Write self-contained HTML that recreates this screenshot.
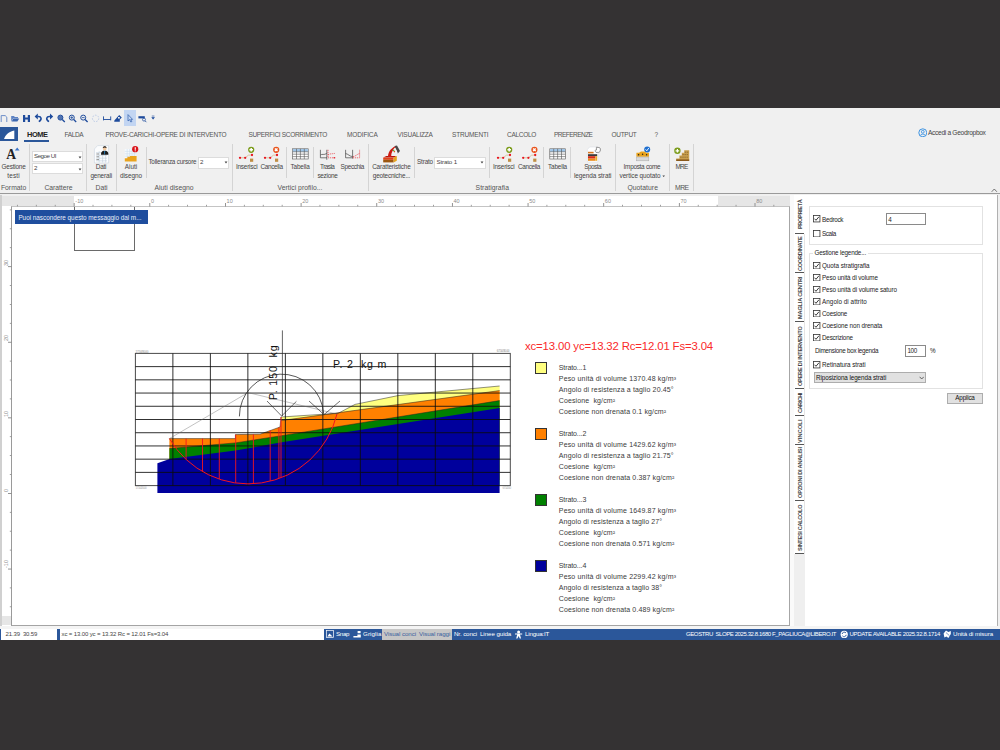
<!DOCTYPE html><html><head><meta charset="utf-8"><title>GeoStru Slope</title><style>
html,body{margin:0;padding:0}body{width:1000px;height:750px;position:relative;overflow:hidden;background:#343233;font-family:"Liberation Sans", sans-serif;}
div,svg,span{position:absolute}span{white-space:pre;line-height:1;}
</style></head><body>
<div style="left:0px;top:108.4px;width:1000px;height:531.8px;background:#f0f0f0;"></div>
<div style="left:124px;top:110px;width:12px;height:16px;background:#c2d5f2;"></div>
<div style="left:0px;top:127.4px;width:17.6px;height:14px;background:#2b579a;"></div>
<svg style="left:0px;top:127px" width="18" height="15" viewBox="0 0 18 15"><path d="M4 12 L14.3 12 L14.3 3.4 C9 4.4 5.4 7.6 4 12Z" fill="#fff"/></svg>
<div style="left:24.4px;top:140.3px;width:24.6px;height:1.5px;background:#2b579a;"></div>
<svg style="left:917.5px;top:127.5px" width="9.6" height="9.6" viewBox="0 0 9.6 9.6"><circle cx="4.8" cy="4.8" r="4" fill="none" stroke="#2d8ae0" stroke-width="0.9"/><circle cx="4.8" cy="3.8" r="1.4" fill="none" stroke="#2d8ae0" stroke-width="0.8"/><path d="M2.2 7.6 C2.6 5.6 7 5.6 7.4 7.6" fill="none" stroke="#2d8ae0" stroke-width="0.8"/></svg>
<svg style="left:990.5px;top:187.5px" width="7" height="5" viewBox="0 0 7 5"><path d="M0.7 3.8 L3.3 1 L5.9 3.8" fill="none" stroke="#555" stroke-width="0.8"/></svg>
<div style="left:0px;top:192.6px;width:1000px;height:0.8px;background:#fff;"></div>
<div style="left:0px;top:193.3px;width:1000px;height:1.2px;background:#9a9a9a;"></div>
<div style="left:28.9px;top:144px;width:1px;height:46.5px;background:#d4d4d4;"></div>
<div style="left:85.9px;top:144px;width:1px;height:46.5px;background:#d4d4d4;"></div>
<div style="left:115.5px;top:144px;width:1px;height:46.5px;background:#d4d4d4;"></div>
<div style="left:231.5px;top:144px;width:1px;height:46.5px;background:#d4d4d4;"></div>
<div style="left:367.5px;top:144px;width:1px;height:46.5px;background:#d4d4d4;"></div>
<div style="left:615.1px;top:144px;width:1px;height:46.5px;background:#d4d4d4;"></div>
<div style="left:668.9px;top:144px;width:1px;height:46.5px;background:#d4d4d4;"></div>
<div style="left:693.1px;top:144px;width:1px;height:46.5px;background:#d4d4d4;"></div>
<div style="left:145.5px;top:147px;width:1px;height:31px;background:#d4d4d4;"></div>
<div style="left:286.1px;top:147px;width:1px;height:31px;background:#d4d4d4;"></div>
<div style="left:312.9px;top:147px;width:1px;height:31px;background:#d4d4d4;"></div>
<div style="left:413.9px;top:147px;width:1px;height:31px;background:#d4d4d4;"></div>
<div style="left:488.9px;top:147px;width:1px;height:31px;background:#d4d4d4;"></div>
<div style="left:543.1px;top:147px;width:1px;height:31px;background:#d4d4d4;"></div>
<div style="left:570.1px;top:147px;width:1px;height:31px;background:#d4d4d4;"></div>
<div style="left:32px;top:151px;width:51px;height:11.2px;background:#fff;border:1px solid #dcdcdc;box-sizing:border-box;"></div>
<div style="left:32px;top:163px;width:51px;height:11.2px;background:#fff;border:1px solid #dcdcdc;box-sizing:border-box;"></div>
<svg style="left:77.5px;top:155.6px" width="4" height="3" viewBox="0 0 4 3"><path d="M0.6 0.6 L3.4 0.6 L2 2.4Z" fill="#444"/></svg>
<svg style="left:77.5px;top:167.6px" width="4" height="3" viewBox="0 0 4 3"><path d="M0.6 0.6 L3.4 0.6 L2 2.4Z" fill="#444"/></svg>
<div style="left:198px;top:156.6px;width:31px;height:12px;background:#fff;border:1px solid #dcdcdc;box-sizing:border-box;"></div>
<svg style="left:223.5px;top:161.2px" width="4" height="3" viewBox="0 0 4 3"><path d="M0.6 0.6 L3.4 0.6 L2 2.4Z" fill="#444"/></svg>
<div style="left:434.4px;top:156.6px;width:52px;height:12px;background:#fff;border:1px solid #dcdcdc;box-sizing:border-box;"></div>
<svg style="left:480.4px;top:161.2px" width="4" height="3" viewBox="0 0 4 3"><path d="M0.6 0.6 L3.4 0.6 L2 2.4Z" fill="#444"/></svg>
<svg style="left:662.3px;top:174.8px" width="3.4" height="2.6" viewBox="0 0 3.4 2.6"><path d="M0.4 0.5 L3 0.5 L1.7 2.1Z" fill="#444"/></svg>
<div style="left:2px;top:196.4px;width:788px;height:10.6px;background:#fff;"></div>
<div style="left:2px;top:196.4px;width:71.5px;height:10px;background:#e6e6e6;"></div>
<div style="left:718px;top:196.4px;width:72px;height:10px;background:#e6e6e6;"></div>
<div style="left:0px;top:195px;width:2px;height:431px;background:#d0d0d0;"></div>
<div style="left:2px;top:207px;width:9.5px;height:418.5px;background:#fff;"></div>
<div style="left:2px;top:615.6px;width:9px;height:9px;background:#e6e6e6;"></div>
<div style="left:11.4px;top:206.4px;width:778.8px;height:419.8px;background:#fff;border:1px solid #c4c4c4;box-sizing:border-box;border-left-color:#9a9a9a;border-bottom-color:#a4a4a4;border-right-color:#a6a6a6;"></div>
<svg style="left:0px;top:196.4px" width="792" height="11" viewBox="0 0 792 11"><rect x="16.96" y="8.8" width="0.8" height="1.6" fill="#888"/><rect x="35.87" y="8.8" width="0.8" height="1.6" fill="#888"/><rect x="54.79" y="8.8" width="0.8" height="1.6" fill="#888"/><rect x="73.70" y="7" width="0.9" height="3.6" fill="#888"/><rect x="92.61" y="8.8" width="0.8" height="1.6" fill="#888"/><rect x="111.52" y="8.8" width="0.8" height="1.6" fill="#888"/><rect x="130.44" y="8.8" width="0.8" height="1.6" fill="#888"/><rect x="149.35" y="7" width="0.9" height="3.6" fill="#888"/><rect x="168.26" y="8.8" width="0.8" height="1.6" fill="#888"/><rect x="187.17" y="8.8" width="0.8" height="1.6" fill="#888"/><rect x="206.09" y="8.8" width="0.8" height="1.6" fill="#888"/><rect x="225.00" y="7" width="0.9" height="3.6" fill="#888"/><rect x="243.91" y="8.8" width="0.8" height="1.6" fill="#888"/><rect x="262.83" y="8.8" width="0.8" height="1.6" fill="#888"/><rect x="281.74" y="8.8" width="0.8" height="1.6" fill="#888"/><rect x="300.65" y="7" width="0.9" height="3.6" fill="#888"/><rect x="319.56" y="8.8" width="0.8" height="1.6" fill="#888"/><rect x="338.48" y="8.8" width="0.8" height="1.6" fill="#888"/><rect x="357.39" y="8.8" width="0.8" height="1.6" fill="#888"/><rect x="376.30" y="7" width="0.9" height="3.6" fill="#888"/><rect x="395.21" y="8.8" width="0.8" height="1.6" fill="#888"/><rect x="414.13" y="8.8" width="0.8" height="1.6" fill="#888"/><rect x="433.04" y="8.8" width="0.8" height="1.6" fill="#888"/><rect x="451.95" y="7" width="0.9" height="3.6" fill="#888"/><rect x="470.86" y="8.8" width="0.8" height="1.6" fill="#888"/><rect x="489.78" y="8.8" width="0.8" height="1.6" fill="#888"/><rect x="508.69" y="8.8" width="0.8" height="1.6" fill="#888"/><rect x="527.60" y="7" width="0.9" height="3.6" fill="#888"/><rect x="546.51" y="8.8" width="0.8" height="1.6" fill="#888"/><rect x="565.43" y="8.8" width="0.8" height="1.6" fill="#888"/><rect x="584.34" y="8.8" width="0.8" height="1.6" fill="#888"/><rect x="603.25" y="7" width="0.9" height="3.6" fill="#888"/><rect x="622.16" y="8.8" width="0.8" height="1.6" fill="#888"/><rect x="641.08" y="8.8" width="0.8" height="1.6" fill="#888"/><rect x="659.99" y="8.8" width="0.8" height="1.6" fill="#888"/><rect x="678.90" y="7" width="0.9" height="3.6" fill="#888"/><rect x="697.81" y="8.8" width="0.8" height="1.6" fill="#888"/><rect x="716.73" y="8.8" width="0.8" height="1.6" fill="#888"/><rect x="735.64" y="8.8" width="0.8" height="1.6" fill="#888"/><rect x="754.55" y="7" width="0.9" height="3.6" fill="#888"/><rect x="773.46" y="8.8" width="0.8" height="1.6" fill="#888"/></svg>
<svg style="left:0.8px;top:0px" width="11" height="640" viewBox="0 0 11 640"><rect x="8.8" y="606.40" width="1.6" height="0.8" fill="#888"/><rect x="8.8" y="587.50" width="1.6" height="0.8" fill="#888"/><rect x="7" y="568.60" width="3.6" height="0.9" fill="#888"/><rect x="8.8" y="549.70" width="1.6" height="0.8" fill="#888"/><rect x="8.8" y="530.80" width="1.6" height="0.8" fill="#888"/><rect x="8.8" y="511.90" width="1.6" height="0.8" fill="#888"/><rect x="7" y="493.00" width="3.6" height="0.9" fill="#888"/><rect x="8.8" y="474.10" width="1.6" height="0.8" fill="#888"/><rect x="8.8" y="455.20" width="1.6" height="0.8" fill="#888"/><rect x="8.8" y="436.30" width="1.6" height="0.8" fill="#888"/><rect x="7" y="417.40" width="3.6" height="0.9" fill="#888"/><rect x="8.8" y="398.50" width="1.6" height="0.8" fill="#888"/><rect x="8.8" y="379.60" width="1.6" height="0.8" fill="#888"/><rect x="8.8" y="360.70" width="1.6" height="0.8" fill="#888"/><rect x="7" y="341.80" width="3.6" height="0.9" fill="#888"/><rect x="8.8" y="322.90" width="1.6" height="0.8" fill="#888"/><rect x="8.8" y="304.00" width="1.6" height="0.8" fill="#888"/><rect x="8.8" y="285.10" width="1.6" height="0.8" fill="#888"/><rect x="7" y="266.20" width="3.6" height="0.9" fill="#888"/><rect x="8.8" y="247.30" width="1.6" height="0.8" fill="#888"/><rect x="8.8" y="228.40" width="1.6" height="0.8" fill="#888"/><rect x="8.8" y="209.50" width="1.6" height="0.8" fill="#888"/></svg>
<div style="left:74px;top:207px;width:61px;height:44.4px;border:1px solid #6a6a6a;box-sizing:border-box;border-top:none;"></div>
<div style="left:15px;top:210.4px;width:133px;height:14px;background:#1f4e9e;"></div>
<div style="left:790.4px;top:195px;width:4.2px;height:431px;background:#fafafa;"></div>
<div style="left:794.4px;top:195px;width:11px;height:431px;background:#fff;"></div>
<div style="left:794.4px;top:553.6px;width:10.4px;height:72px;background:#efefef;"></div>
<div style="left:804.4px;top:234px;width:0.9px;height:320px;background:#e4e4e4;"></div>
<div style="left:805px;top:195px;width:192.6px;height:431px;background:#fff;"></div>
<div style="left:997.3px;top:195px;width:1.2px;height:431px;background:#b0b0b0;"></div>
<div style="left:805px;top:625.6px;width:193px;height:1px;background:#b0b0b0;"></div>
<div style="left:794.6px;top:196px;width:10.8px;height:37px;background:#fff;"></div>
<div style="left:795.4px;top:232.7px;width:8.8px;height:1px;background:#555;"></div>
<div style="left:795.4px;top:271.9px;width:8.8px;height:1px;background:#555;"></div>
<div style="left:795.4px;top:320.7px;width:8.8px;height:1px;background:#555;"></div>
<div style="left:795.4px;top:387.9px;width:8.8px;height:1px;background:#555;"></div>
<div style="left:795.4px;top:415.1px;width:8.8px;height:1px;background:#555;"></div>
<div style="left:795.4px;top:444.3px;width:8.8px;height:1px;background:#555;"></div>
<div style="left:795.4px;top:500.1px;width:8.8px;height:1px;background:#555;"></div>
<div style="left:795.4px;top:553.1px;width:8.8px;height:1px;background:#555;"></div>
<div style="left:809.4px;top:206px;width:174px;height:39.2px;border:1px solid #e2e2e2;box-sizing:border-box;"></div>
<div style="left:809.4px;top:252.8px;width:174px;height:136px;border:1px solid #e2e2e2;box-sizing:border-box;"></div>
<div style="left:813px;top:249px;width:54.5px;height:8px;background:#fff;"></div>
<svg style="left:813.2px;top:215.3px" width="7.4" height="7.4" viewBox="0 0 7.4 7.4"><rect x="0.45" y="0.45" width="6.5" height="6.5" fill="#fff" stroke="#333" stroke-width="0.8"/><path d="M1.5 3.7 L3 5.3 L5.9 1.8" fill="none" stroke="#222" stroke-width="0.9"/></svg>
<svg style="left:813.2px;top:229.70000000000002px" width="7.4" height="7.4" viewBox="0 0 7.4 7.4"><rect x="0.45" y="0.45" width="6.5" height="6.5" fill="#fff" stroke="#333" stroke-width="0.8"/></svg>
<div style="left:886.4px;top:213.4px;width:39.4px;height:11.4px;background:#fff;border:1px solid #8a8a8a;box-sizing:border-box;"></div>
<svg style="left:813.2px;top:261.90000000000003px" width="7.4" height="7.4" viewBox="0 0 7.4 7.4"><rect x="0.45" y="0.45" width="6.5" height="6.5" fill="#fff" stroke="#333" stroke-width="0.8"/><path d="M1.5 3.7 L3 5.3 L5.9 1.8" fill="none" stroke="#222" stroke-width="0.9"/></svg>
<svg style="left:813.2px;top:273.90000000000003px" width="7.4" height="7.4" viewBox="0 0 7.4 7.4"><rect x="0.45" y="0.45" width="6.5" height="6.5" fill="#fff" stroke="#333" stroke-width="0.8"/><path d="M1.5 3.7 L3 5.3 L5.9 1.8" fill="none" stroke="#222" stroke-width="0.9"/></svg>
<svg style="left:813.2px;top:285.90000000000003px" width="7.4" height="7.4" viewBox="0 0 7.4 7.4"><rect x="0.45" y="0.45" width="6.5" height="6.5" fill="#fff" stroke="#333" stroke-width="0.8"/><path d="M1.5 3.7 L3 5.3 L5.9 1.8" fill="none" stroke="#222" stroke-width="0.9"/></svg>
<svg style="left:813.2px;top:297.90000000000003px" width="7.4" height="7.4" viewBox="0 0 7.4 7.4"><rect x="0.45" y="0.45" width="6.5" height="6.5" fill="#fff" stroke="#333" stroke-width="0.8"/><path d="M1.5 3.7 L3 5.3 L5.9 1.8" fill="none" stroke="#222" stroke-width="0.9"/></svg>
<svg style="left:813.2px;top:309.90000000000003px" width="7.4" height="7.4" viewBox="0 0 7.4 7.4"><rect x="0.45" y="0.45" width="6.5" height="6.5" fill="#fff" stroke="#333" stroke-width="0.8"/><path d="M1.5 3.7 L3 5.3 L5.9 1.8" fill="none" stroke="#222" stroke-width="0.9"/></svg>
<svg style="left:813.2px;top:321.90000000000003px" width="7.4" height="7.4" viewBox="0 0 7.4 7.4"><rect x="0.45" y="0.45" width="6.5" height="6.5" fill="#fff" stroke="#333" stroke-width="0.8"/><path d="M1.5 3.7 L3 5.3 L5.9 1.8" fill="none" stroke="#222" stroke-width="0.9"/></svg>
<svg style="left:813.2px;top:333.90000000000003px" width="7.4" height="7.4" viewBox="0 0 7.4 7.4"><rect x="0.45" y="0.45" width="6.5" height="6.5" fill="#fff" stroke="#333" stroke-width="0.8"/><path d="M1.5 3.7 L3 5.3 L5.9 1.8" fill="none" stroke="#222" stroke-width="0.9"/></svg>
<div style="left:905.4px;top:345.2px;width:20.4px;height:11.4px;background:#fff;border:1px solid #8a8a8a;box-sizing:border-box;"></div>
<svg style="left:813.2px;top:361.3px" width="7.4" height="7.4" viewBox="0 0 7.4 7.4"><rect x="0.45" y="0.45" width="6.5" height="6.5" fill="#fff" stroke="#333" stroke-width="0.8"/><path d="M1.5 3.7 L3 5.3 L5.9 1.8" fill="none" stroke="#222" stroke-width="0.9"/></svg>
<div style="left:813.6px;top:372.4px;width:112.2px;height:10.8px;background:#e1e1e1;border:1px solid #adadad;box-sizing:border-box;"></div>
<svg style="left:918.5px;top:376px" width="5.4" height="4" viewBox="0 0 5.4 4"><path d="M0.6 0.8 L2.7 3 L4.8 0.8" fill="none" stroke="#444" stroke-width="0.8"/></svg>
<div style="left:946.6px;top:393px;width:36.6px;height:10.8px;background:#e1e1e1;border:1px solid #adadad;box-sizing:border-box;"></div>
<div style="left:0px;top:626.4px;width:1000px;height:2.2px;background:#f4f4f4;"></div>
<div style="left:0px;top:628.8px;width:1000px;height:11.4px;background:#2b579a;"></div>
<div style="left:1px;top:629px;width:55.6px;height:11px;background:#fff;"></div>
<div style="left:60px;top:629px;width:264px;height:11px;background:#fff;"></div>
<div style="left:382px;top:629px;width:70px;height:11px;background:#c6c6c6;"></div>
<svg style="left:0px;top:0px" width="1000" height="750" viewBox="0 0 1000 750"><rect x="135.4" y="353.4" width="374.9" height="132.2" fill="none" stroke="#4a4a4a" stroke-width="1"/><polygon points="281,417 324,414.2 338,413.4 355,404.4 398,395.6 499.6,386 499.6,440 281,440" fill="#ffff80"/><polygon points="169.4,438.6 235.4,438.6 235.4,434.6 260,434.2 280,427 281,420.6 499.6,390.6 499.6,480 169.4,480" fill="#ff8000"/><polygon points="169.4,448.5 235.4,442.9 280.2,435.9 499.6,400.6 499.6,485 169.4,485" fill="#008000"/><polygon points="157.4,463.2 169.6,459 235.4,450.6 280.2,442.5 499.6,408 499.6,493 157.4,493" fill="#00009c"/><polyline points="169.4,438.6 235.4,438.6 235.4,434.6 260,434.2 280,427 281,417 324,414.2 338,413.4 355,404.4 398,395.6 499.6,386" fill="none" stroke="#222" stroke-width="0.5"/><polyline points="281,420.6 499.6,390.6" fill="none" stroke="#222" stroke-width="0.5"/><polyline points="169.4,448.5 235.4,442.9 280.2,435.9 499.6,400.6" fill="none" stroke="#222" stroke-width="0.5"/><line x1="172.89" y1="353.4" x2="172.89" y2="485.6" stroke="#0c0c0c" stroke-width="0.85"/><line x1="135.4" y1="366.62" x2="510.3" y2="366.62" stroke="#0c0c0c" stroke-width="0.85"/><line x1="210.38" y1="353.4" x2="210.38" y2="485.6" stroke="#0c0c0c" stroke-width="0.85"/><line x1="135.4" y1="379.84" x2="510.3" y2="379.84" stroke="#0c0c0c" stroke-width="0.85"/><line x1="247.87" y1="353.4" x2="247.87" y2="485.6" stroke="#0c0c0c" stroke-width="0.85"/><line x1="135.4" y1="393.06" x2="510.3" y2="393.06" stroke="#0c0c0c" stroke-width="0.85"/><line x1="285.36" y1="353.4" x2="285.36" y2="485.6" stroke="#0c0c0c" stroke-width="0.85"/><line x1="135.4" y1="406.28" x2="510.3" y2="406.28" stroke="#0c0c0c" stroke-width="0.85"/><line x1="322.85" y1="353.4" x2="322.85" y2="485.6" stroke="#0c0c0c" stroke-width="0.85"/><line x1="135.4" y1="419.50" x2="510.3" y2="419.50" stroke="#0c0c0c" stroke-width="0.85"/><line x1="360.34" y1="353.4" x2="360.34" y2="485.6" stroke="#0c0c0c" stroke-width="0.85"/><line x1="135.4" y1="432.72" x2="510.3" y2="432.72" stroke="#0c0c0c" stroke-width="0.85"/><line x1="397.83" y1="353.4" x2="397.83" y2="485.6" stroke="#0c0c0c" stroke-width="0.85"/><line x1="135.4" y1="445.94" x2="510.3" y2="445.94" stroke="#0c0c0c" stroke-width="0.85"/><line x1="435.32" y1="353.4" x2="435.32" y2="485.6" stroke="#0c0c0c" stroke-width="0.85"/><line x1="135.4" y1="459.16" x2="510.3" y2="459.16" stroke="#0c0c0c" stroke-width="0.85"/><line x1="472.81" y1="353.4" x2="472.81" y2="485.6" stroke="#0c0c0c" stroke-width="0.85"/><line x1="135.4" y1="472.38" x2="510.3" y2="472.38" stroke="#0c0c0c" stroke-width="0.85"/><line x1="157.4" y1="485.6" x2="499.6" y2="485.6" stroke="#0c0c0c" stroke-width="0.85"/><path d="M169.4 438.6 A91.3 91.3 0 0 0 337 414" fill="none" stroke="#f5141e" stroke-width="1"/><line x1="186.1" y1="438.6" x2="186.1" y2="459.4" stroke="#f5141e" stroke-width="0.9"/><line x1="202.5" y1="438.6" x2="202.5" y2="471.5" stroke="#f5141e" stroke-width="0.9"/><line x1="219.3" y1="438.6" x2="219.3" y2="479.0" stroke="#f5141e" stroke-width="0.9"/><line x1="235.7" y1="434.6" x2="235.7" y2="482.8" stroke="#f5141e" stroke-width="0.9"/><line x1="253.4" y1="434.3" x2="253.4" y2="483.4" stroke="#f5141e" stroke-width="0.9"/><line x1="270.2" y1="430.5" x2="270.2" y2="480.9" stroke="#f5141e" stroke-width="0.9"/><line x1="278.9" y1="427.4" x2="278.9" y2="478.2" stroke="#f5141e" stroke-width="0.9"/><line x1="281" y1="417.0" x2="281" y2="477.4" stroke="#f5141e" stroke-width="0.9"/><polyline points="169.4,438.6 248,392.6 337,414" fill="none" stroke="#666" stroke-width="0.4"/><line x1="282.4" y1="330.4" x2="282.4" y2="416" stroke="#222" stroke-width="0.7"/><polyline points="267,401 281.6,416 296.4,401.4" fill="none" stroke="#222" stroke-width="0.65"/><path d="M239.4 416.4 A42.15 42.15 0 0 1 323.6 413.4" fill="none" stroke="#222" stroke-width="0.75"/><polyline points="309,401 324,414.6 340,401" fill="none" stroke="#222" stroke-width="0.65"/></svg>
<div style="left:535px;top:362px;width:12px;height:12px;background:#ffff80;border:1px solid #333;box-sizing:border-box;"></div>
<div style="left:535px;top:428px;width:12px;height:12px;background:#ff8000;border:1px solid #333;box-sizing:border-box;"></div>
<div style="left:535px;top:494px;width:12px;height:12px;background:#008000;border:1px solid #333;box-sizing:border-box;"></div>
<div style="left:535px;top:560.2px;width:12px;height:12px;background:#00009c;border:1px solid #333;box-sizing:border-box;"></div>
<svg style="left:0px;top:0px" width="1000" height="750" viewBox="0 0 1000 750"><path d="M1.2 122 V115.6 H5.2 L6.8 117.2 V122" fill="none" stroke="#5d83c4" stroke-width="0.9"/><path d="M11.2 121.4 V116 H14 L14.8 117 H18 V118.2 H13.2 L11.2 121.4Z" fill="#5d83c4"/><path d="M11.6 121.6 L13.4 118.4 H19.2 L17.4 121.6Z" fill="#3b66b0"/><path d="M23 115 H25.2 V117.6 H27.8 V115 H30 V122 H27.8 V119.4 H25.2 V122 H23Z" fill="#1e4b9c"/><path d="M34.6 116.6 L37.8 113.6 V119.4Z" fill="#1e4b9c"/><path d="M37.4 116.5 C41.8 116 42.2 119.8 38.8 121.6" fill="none" stroke="#1e4b9c" stroke-width="1.6"/><path d="M53.2 116.6 L50 113.6 V119.4Z" fill="#1e4b9c"/><path d="M50.4 116.5 C46 116 45.6 119.8 49 121.6" fill="none" stroke="#1e4b9c" stroke-width="1.6"/><circle cx="60.4" cy="117.6" r="2.5" fill="none" stroke="#1e4b9c" stroke-width="1"/><line x1="62.3" y1="119.5" x2="64.8" y2="122" stroke="#1e4b9c" stroke-width="1.3"/><circle cx="60.4" cy="117.6" r="2.4" fill="#1e4b9c" opacity="0.75"/><circle cx="71.8" cy="117.6" r="2.5" fill="none" stroke="#1e4b9c" stroke-width="1"/><line x1="73.7" y1="119.5" x2="76.2" y2="122" stroke="#1e4b9c" stroke-width="1.3"/><path d="M70.39999999999999 117.6 H73.2 M71.8 116.2 V119" stroke="#1e4b9c" stroke-width="0.8"/><circle cx="83.2" cy="117.6" r="2.5" fill="none" stroke="#1e4b9c" stroke-width="1"/><line x1="85.10000000000001" y1="119.5" x2="87.60000000000001" y2="122" stroke="#1e4b9c" stroke-width="1.3"/><path d="M81.8 117.6 H84.60000000000001" stroke="#1e4b9c" stroke-width="0.8"/><circle cx="95.6" cy="118.4" r="3.2" fill="none" stroke="#b5c6e3" stroke-width="0.9" stroke-dasharray="1.6 1.2"/><path d="M103.5 116.4 V120.4 M110.7 116.4 V120.4 M103.5 119.5 H110.7" stroke="#1e4b9c" stroke-width="0.9" fill="none"/><path d="M114.2 121.8 C114.2 119.6 116 119.2 117 117.6 L119.2 115 L121.8 117.4 L119.8 119.4 V121.8Z" fill="#1e4b9c"/><rect x="118" y="117" width="1.8" height="1.6" fill="#f0f0f0"/><path d="M128 114.6 V121 L129.6 119.6 L130.8 122 L131.8 121.6 L130.8 119.4 H132.6Z" fill="none" stroke="#2d5cab" stroke-width="0.7"/><path d="M138.4 116.2 H144.8 V118.4 H138.4Z" fill="#1e4b9c"/><circle cx="144" cy="119.6" r="1.5" fill="none" stroke="#1e4b9c" stroke-width="0.7"/><line x1="145" y1="120.8" x2="146.4" y2="122.2" stroke="#1e4b9c" stroke-width="0.8"/><path d="M151.8 116 H154.4 M151.8 117.4 H154.4 L153.1 119.2Z" stroke="#1e4b9c" stroke-width="0.6" fill="#1e4b9c"/><path d="M14.8 150.4 L17.2 147.6 L19.6 150.4Z" fill="#3b74c9"/><path d="M94.4 163 V149 L97.6 145.6 H108.6 V163Z" fill="#fbfcfd" stroke="#c9d3de" stroke-width="0.6"/><path d="M96 152.6 H107 M96 155.4 H107 M96 158.2 H107 M96 160.8 H107 M99.2 151 V162.4 M102.6 151 V162.4 M105.6 151 V162.4" stroke="#b9c9d9" stroke-width="0.5" fill="none"/><path d="M96.4 154 H99 M96.4 156.8 H99 M96.4 159.6 H99" stroke="#666" stroke-width="0.7"/><path d="M101 154.8 C101 151.2 103 150.8 104.6 150.8 C106.4 150.8 108.4 151.2 108.4 154.8Z" fill="#1c1c1c"/><circle cx="104.7" cy="148.4" r="1.9" fill="#f2c9a0"/><path d="M102.8 148 C102.8 145.6 106.6 145.6 106.6 148 C105.6 147.2 103.8 147.2 102.8 148Z" fill="#1c1c1c"/><path d="M104.2 151 H105.2 L105 154.6 H104.4Z" fill="#2a8fd4"/><rect x="124.8" y="149" width="11.8" height="12.4" fill="#f4f9fd"/><path d="M124.8 151.4 H136.6 M124.8 153.8 H136.6 M124.8 156.2 H136.6 M127.2 149 V161.4 M129.6 149 V161.4 M132 149 V161.4 M134.4 149 V161.4" stroke="#c6d9ea" stroke-width="0.5"/><path d="M124.8 161.4 V158.2 H127.4 V156.8 H130 V156 H136.6 V161.4Z" fill="#eaa41e"/><circle cx="135.2" cy="149.2" r="3.1" fill="#d9141a"/><rect x="134.7" y="147.2" width="1.1" height="2.6" fill="#fff"/><rect x="134.7" y="150.3" width="1.1" height="1" fill="#fff"/><polyline points="240,157.8 245.2,157.8 248.4,155.2 252,155" fill="none" stroke="#d6b98c" stroke-width="0.8"/><circle cx="240" cy="157.8" r="1.15" fill="#e8141e"/><circle cx="245.2" cy="157.8" r="1.15" fill="#e8141e"/><circle cx="252" cy="155" r="1.15" fill="#e8141e"/><rect x="250" y="158.6" width="3.2" height="3.2" fill="#c08e44"/><circle cx="251.2" cy="149.8" r="3.1" fill="#7c9c1c"/><path d="M249.4 149.8 H253 M251.2 148 V151.6" stroke="#fff" stroke-width="1.5"/><polyline points="265,157.8 270.2,157.8 273.4,155.2 277,155" fill="none" stroke="#d6b98c" stroke-width="0.8"/><circle cx="265" cy="157.8" r="1.15" fill="#e8141e"/><circle cx="270.2" cy="157.8" r="1.15" fill="#e8141e"/><circle cx="277" cy="155" r="1.15" fill="#e8141e"/><rect x="275" y="158.6" width="3.2" height="3.2" fill="#c08e44"/><circle cx="276.2" cy="149.8" r="3.1" fill="#e9541c"/><path d="M274.9 148.5 L277.5 151.1 M277.5 148.5 L274.9 151.1" stroke="#fff" stroke-width="1.4"/><polyline points="498,157.8 503.2,157.8 506.4,155.2 510,155" fill="none" stroke="#d6b98c" stroke-width="0.8"/><circle cx="498" cy="157.8" r="1.15" fill="#e8141e"/><circle cx="503.2" cy="157.8" r="1.15" fill="#e8141e"/><circle cx="510" cy="155" r="1.15" fill="#e8141e"/><rect x="508" y="158.6" width="3.2" height="3.2" fill="#c08e44"/><circle cx="509.2" cy="149.8" r="3.1" fill="#7c9c1c"/><path d="M507.4 149.8 H511 M509.2 148 V151.6" stroke="#fff" stroke-width="1.5"/><polyline points="523.2,157.8 528.4000000000001,157.8 531.6,155.2 535.2,155" fill="none" stroke="#d6b98c" stroke-width="0.8"/><circle cx="523.2" cy="157.8" r="1.15" fill="#e8141e"/><circle cx="528.4000000000001" cy="157.8" r="1.15" fill="#e8141e"/><circle cx="535.2" cy="155" r="1.15" fill="#e8141e"/><rect x="533.2" y="158.6" width="3.2" height="3.2" fill="#c08e44"/><circle cx="534.4000000000001" cy="149.8" r="3.1" fill="#e9541c"/><path d="M533.1 148.5 L535.7 151.1 M535.7 148.5 L533.1 151.1" stroke="#fff" stroke-width="1.4"/><rect x="292.6" y="148.8" width="15.6" height="10.2" fill="#fff" stroke="#555" stroke-width="0.6"/><rect x="292.90000000000003" y="149.1" width="15" height="2.6" fill="#9cc3e6"/><line x1="296.5" y1="148.8" x2="296.5" y2="159" stroke="#555" stroke-width="0.6"/><line x1="300.40000000000003" y1="148.8" x2="300.40000000000003" y2="159" stroke="#555" stroke-width="0.6"/><line x1="304.3" y1="148.8" x2="304.3" y2="159" stroke="#555" stroke-width="0.6"/><line x1="292.6" y1="151.8" x2="308.20000000000005" y2="151.8" stroke="#555" stroke-width="0.6"/><line x1="292.6" y1="154.2" x2="308.20000000000005" y2="154.2" stroke="#555" stroke-width="0.6"/><line x1="292.6" y1="156.6" x2="308.20000000000005" y2="156.6" stroke="#555" stroke-width="0.6"/><rect x="549.8" y="148.8" width="15.6" height="10.2" fill="#fff" stroke="#555" stroke-width="0.6"/><rect x="550.0999999999999" y="149.1" width="15" height="2.6" fill="#9cc3e6"/><line x1="553.6999999999999" y1="148.8" x2="553.6999999999999" y2="159" stroke="#555" stroke-width="0.6"/><line x1="557.5999999999999" y1="148.8" x2="557.5999999999999" y2="159" stroke="#555" stroke-width="0.6"/><line x1="561.5" y1="148.8" x2="561.5" y2="159" stroke="#555" stroke-width="0.6"/><line x1="549.8" y1="151.8" x2="565.4" y2="151.8" stroke="#555" stroke-width="0.6"/><line x1="549.8" y1="154.2" x2="565.4" y2="154.2" stroke="#555" stroke-width="0.6"/><line x1="549.8" y1="156.6" x2="565.4" y2="156.6" stroke="#555" stroke-width="0.6"/><path d="M320.4 149.8 V157.8 H327 M320.4 155 C322 153.6 324 155.4 326.8 153.4 M326.8 149.8 V159.8" fill="none" stroke="#444" stroke-width="0.7"/><path d="M328 149.8 V157.8 M328 157.8 H335 M328 155 C330 153.4 332 154 334.8 153.4" fill="none" stroke="#e6303a" stroke-width="0.7" stroke-dasharray="1.2 0.8"/><rect x="333.6" y="157" width="1.6" height="1.4" fill="#e6303a"/><path d="M345.6 149.8 V157.8 H352.6 M345.6 153.6 C347.6 153.6 350 156.6 352.6 156.6 M352.6 149.8 V158.6" fill="none" stroke="#444" stroke-width="0.7"/><path d="M352.8 157.8 H359.6 V149.8 M352.8 156.6 C355.4 156.6 357.8 153.6 359.6 153.6" fill="none" stroke="#e6303a" stroke-width="0.7" stroke-dasharray="1.2 0.8"/><path d="M383.2 157.6 L386.4 156 H396.8 L393.6 157.6Z" fill="#b5140c"/><rect x="383.2" y="157.6" width="10.4" height="2.2" fill="#e2401a"/><rect x="383.2" y="159.8" width="10.4" height="2.6" fill="#9c560e"/><path d="M393.6 157.6 L396.8 156 V160.8 L393.6 162.4Z" fill="#e6a41e"/><path d="M388 157 C388 152 390.4 149 395 146.2 L396 147.6 C392.6 150 391 152.6 391.2 157Z" fill="#cc1a12"/><path d="M394.6 146 L397 145.6 L400 151 L397.8 153.6Z" fill="#4a4a4a"/><path d="M395 147.6 L397.6 152.6 L396 153.4 L393.2 149.6Z" fill="#f4f4f4"/><circle cx="393.6" cy="150.4" r="0.8" fill="#3fc43a"/><circle cx="394.4" cy="151.6" r="0.8" fill="#e9541c"/><path d="M587.4 162 V149.6 L589.6 147 H598 V162Z" fill="#fff" stroke="#d5dbe2" stroke-width="0.5"/><rect x="588" y="151.8" width="5.6" height="1.6" fill="#d9761e"/><rect x="588" y="154.2" width="9.2" height="2" fill="#3a3a3a"/><rect x="588" y="156.2" width="7.4" height="2.4" fill="#d92a14"/><rect x="588" y="158.6" width="7.4" height="2.2" fill="#e98a1a"/><rect x="595.4" y="156.2" width="1.8" height="4.6" fill="#eaa82a"/><path d="M596 152.4 C594.6 150.8 595.4 149.4 596.4 150 V147.6 C596.4 146.6 597.6 146.6 597.6 147.6 C599.4 147 600.6 148 600.4 150 C600.2 151.6 599.4 152.4 598.6 152.4Z" fill="#fff" stroke="#555" stroke-width="0.6"/><path d="M636.4 156.8 V152.8 H639 L641 151.4 H644.4 L646.4 152.8 H649 V156.8Z" fill="#eaa41e"/><circle cx="638.6" cy="154.8" r="0.7" fill="#222"/><circle cx="642.6" cy="154.2" r="0.7" fill="#222"/><circle cx="646.6" cy="154.8" r="0.7" fill="#222"/><rect x="636.6" y="157" width="12.2" height="3.8" fill="#d9d9d9" stroke="#a8a8a8" stroke-width="0.5"/><circle cx="647.2" cy="149.4" r="3" fill="#1e6fd0"/><path d="M645.6 149.4 L646.8 150.8 L648.8 148" fill="none" stroke="#fff" stroke-width="0.9"/><path d="M676.2 160.8 V158.4 H679.4 V155.6 H681.8 V152.8 H684.2 V150.2 H689.2 V160.8Z" fill="#c99f4e"/><rect x="676.2" y="159.4" width="13" height="1.6" fill="#8a5a1c"/><path d="M682.4 154.6 H688.6 M680.2 157.2 H688.6 M684.8 152.2 H688.6" stroke="#7a5a26" stroke-width="0.7" stroke-dasharray="1.4 0.7"/><circle cx="677.4" cy="150.8" r="3.2" fill="#7c9c1c"/><path d="M675.6 150.8 H679.2 M677.4 149 V152.6" stroke="#fff" stroke-width="1.2"/><rect x="326.4" y="630.6" width="7.2" height="7" fill="none" stroke="#fff" stroke-width="0.7"/><path d="M327.4 636.6 L329.4 633.4 L332.6 636.6Z" fill="#fff"/><path d="M353.4 637.4 H360.8 V634.4 H357.4 V636 H353.4Z" fill="#fff"/><rect x="357.6" y="631" width="3" height="2.2" fill="#fff"/><circle cx="518.6" cy="632" r="1.5" fill="#fff"/><path d="M515 633.6 H522.2 V634.6 H520 L521 638.4 H519.8 L518.6 636 L517.4 638.4 H516.2 L517.2 634.6 H515Z" fill="#fff"/><circle cx="844.2" cy="634.4" r="3.6" fill="#fff"/><path d="M842.2 634 A2.1 2.1 0 0 1 846 633 M846.2 634.8 A2.1 2.1 0 0 1 842.4 635.8" fill="none" stroke="#2b579a" stroke-width="0.9"/><path d="M943.6 633.4 L946 630.6 L948.4 632 L950.8 631 V634 L948.4 638 L946.4 636.4 L944.4 637.6Z" fill="#fff"/><path d="M946 632.6 L949.4 635.6" stroke="#2b579a" stroke-width="0.6"/></svg>
<span id="t0" style="font-size:7.4px;color:#222;font-weight:bold;letter-spacing:-0.422px;left:27px;top:130.60px;">HOME</span>
<span id="t1" style="font-size:6.5px;color:#555;letter-spacing:-0.319px;left:64.4px;top:132.25px;">FALDA</span>
<span id="t2" style="font-size:6.5px;color:#555;letter-spacing:-0.223px;left:105.4px;top:132.25px;">PROVE-CARICHI-OPERE DI INTERVENTO</span>
<span id="t3" style="font-size:6.5px;color:#555;letter-spacing:-0.310px;left:248.4px;top:132.25px;">SUPERFICI SCORRIMENTO</span>
<span id="t4" style="font-size:6.5px;color:#555;letter-spacing:-0.148px;left:347px;top:132.25px;">MODIFICA</span>
<span id="t5" style="font-size:6.5px;color:#555;letter-spacing:-0.222px;left:397.6px;top:132.25px;">VISUALIZZA</span>
<span id="t6" style="font-size:6.5px;color:#555;letter-spacing:-0.169px;left:452px;top:132.25px;">STRUMENTI</span>
<span id="t7" style="font-size:6.5px;color:#555;letter-spacing:-0.297px;left:507px;top:132.25px;">CALCOLO</span>
<span id="t8" style="font-size:6.5px;color:#555;letter-spacing:-0.530px;left:554px;top:132.25px;">PREFERENZE</span>
<span id="t9" style="font-size:6.5px;color:#555;letter-spacing:-0.256px;left:611.4px;top:132.25px;">OUTPUT</span>
<span id="t10" style="font-size:6.5px;color:#555;left:654.4px;top:132.25px;">?</span>
<span id="t11" style="font-size:6.6px;color:#444;letter-spacing:-0.306px;left:928px;top:129.80px;">Accedi a Geodropbox</span>
<span id="t12" style="font-size:6.4px;color:#444;letter-spacing:-0.199px;left:13.6px;top:163.70px;transform:translateX(-50%);">Gestione</span>
<span id="t13" style="font-size:6.4px;color:#444;letter-spacing:0.153px;left:13.6px;top:172.50px;transform:translateX(-50%);">testi</span>
<span id="t14" style="font-size:6.8px;color:#555;letter-spacing:0.012px;left:13.6px;top:185.20px;transform:translateX(-50%);">Formato</span>
<span id="t15" style="font-size:6.2px;color:#444;letter-spacing:-0.477px;left:34px;top:152.50px;">Segoe UI</span>
<span id="t16" style="font-size:6.2px;color:#444;left:34px;top:164.50px;">2</span>
<span id="t17" style="font-size:6.8px;color:#555;letter-spacing:-0.038px;left:58.4px;top:185.20px;transform:translateX(-50%);">Carattere</span>
<span id="t18" style="font-size:6.4px;color:#444;letter-spacing:-0.219px;left:101px;top:163.70px;transform:translateX(-50%);">Dati</span>
<span id="t19" style="font-size:6.4px;color:#444;letter-spacing:-0.144px;left:101.2px;top:172.50px;transform:translateX(-50%);">generali</span>
<span id="t20" style="font-size:6.8px;color:#555;letter-spacing:-0.023px;left:101.6px;top:185.20px;transform:translateX(-50%);">Dati</span>
<span id="t21" style="font-size:6.4px;color:#444;letter-spacing:0.013px;left:131px;top:163.70px;transform:translateX(-50%);">Aiuti</span>
<span id="t22" style="font-size:6.4px;color:#444;letter-spacing:-0.056px;left:131px;top:172.50px;transform:translateX(-50%);">disegno</span>
<span id="t23" style="font-size:6.3px;color:#444;letter-spacing:-0.192px;left:148.4px;top:158.55px;">Tolleranza cursore</span>
<span id="t24" style="font-size:6.2px;color:#444;left:200px;top:158.60px;">2</span>
<span id="t25" style="font-size:6.8px;color:#555;letter-spacing:0.021px;left:174px;top:185.20px;transform:translateX(-50%);">Aiuti disegno</span>
<span id="t26" style="font-size:6.4px;color:#444;letter-spacing:-0.228px;left:246.7px;top:164.40px;transform:translateX(-50%);">Inserisci</span>
<span id="t27" style="font-size:6.4px;color:#444;letter-spacing:-0.359px;left:271.6px;top:164.40px;transform:translateX(-50%);">Cancella</span>
<span id="t28" style="font-size:6.4px;color:#444;letter-spacing:-0.181px;left:300.1px;top:164.40px;transform:translateX(-50%);">Tabella</span>
<span id="t29" style="font-size:6.4px;color:#444;letter-spacing:-0.522px;left:327.2px;top:164.40px;transform:translateX(-50%);">Trasla</span>
<span id="t30" style="font-size:6.4px;color:#444;letter-spacing:-0.262px;left:327.5px;top:172.60px;transform:translateX(-50%);">sezione</span>
<span id="t31" style="font-size:6.4px;color:#444;letter-spacing:-0.362px;left:352.3px;top:164.40px;transform:translateX(-50%);">Specchia</span>
<span id="t32" style="font-size:6.8px;color:#555;letter-spacing:0.012px;left:300px;top:185.20px;transform:translateX(-50%);">Vertici profilo...</span>
<span id="t33" style="font-size:6.4px;color:#444;letter-spacing:-0.187px;left:391.4px;top:164.40px;transform:translateX(-50%);">Caratteristiche</span>
<span id="t34" style="font-size:6.4px;color:#444;letter-spacing:-0.171px;left:391.5px;top:172.60px;transform:translateX(-50%);">geotecniche...</span>
<span id="t35" style="font-size:6.3px;color:#444;letter-spacing:-0.135px;left:417px;top:158.55px;">Strato</span>
<span id="t36" style="font-size:6.2px;color:#444;letter-spacing:-0.159px;left:436.6px;top:158.60px;">Strato 1</span>
<span id="t37" style="font-size:6.4px;color:#444;letter-spacing:-0.228px;left:503.7px;top:164.40px;transform:translateX(-50%);">Inserisci</span>
<span id="t38" style="font-size:6.4px;color:#444;letter-spacing:-0.359px;left:529px;top:164.40px;transform:translateX(-50%);">Cancella</span>
<span id="t39" style="font-size:6.4px;color:#444;letter-spacing:-0.181px;left:557.5px;top:164.40px;transform:translateX(-50%);">Tabella</span>
<span id="t40" style="font-size:6.4px;color:#444;letter-spacing:-0.484px;left:592.7px;top:164.40px;transform:translateX(-50%);">Sposta</span>
<span id="t41" style="font-size:6.4px;color:#444;letter-spacing:-0.055px;left:592.7px;top:172.60px;transform:translateX(-50%);">legenda strati</span>
<span id="t42" style="font-size:6.8px;color:#555;letter-spacing:0.044px;left:492.3px;top:185.20px;transform:translateX(-50%);">Stratigrafia</span>
<span id="t43" style="font-size:6.4px;color:#444;letter-spacing:-0.278px;left:642px;top:163.80px;transform:translateX(-50%);">Imposta come</span>
<span id="t44" style="font-size:6.4px;color:#444;letter-spacing:-0.061px;left:640px;top:172.80px;transform:translateX(-50%);">vertice quotato</span>
<span id="t45" style="font-size:6.8px;color:#555;letter-spacing:0.041px;left:642.7px;top:185.20px;transform:translateX(-50%);">Quotature</span>
<span id="t46" style="font-size:6.4px;color:#444;letter-spacing:-0.801px;left:681.5px;top:164.40px;transform:translateX(-50%);">MRE</span>
<span id="t47" style="font-size:6.8px;color:#555;letter-spacing:-0.503px;left:681.8px;top:185.20px;transform:translateX(-50%);">MRE</span>
<span id="t48" style="font-size:5.5px;color:#8c8c8c;left:75.3px;top:198.65px;">-10</span>
<span id="t49" style="font-size:5.5px;color:#8c8c8c;left:150.95px;top:198.65px;">0</span>
<span id="t50" style="font-size:5.5px;color:#8c8c8c;left:226.6px;top:198.65px;">10</span>
<span id="t51" style="font-size:5.5px;color:#8c8c8c;left:302.25px;top:198.65px;">20</span>
<span id="t52" style="font-size:5.5px;color:#8c8c8c;left:377.90000000000003px;top:198.65px;">30</span>
<span id="t53" style="font-size:5.5px;color:#8c8c8c;left:453.55px;top:198.65px;">40</span>
<span id="t54" style="font-size:5.5px;color:#8c8c8c;left:529.2px;top:198.65px;">50</span>
<span id="t55" style="font-size:5.5px;color:#8c8c8c;left:604.8500000000001px;top:198.65px;">60</span>
<span id="t56" style="font-size:5.5px;color:#8c8c8c;left:680.5000000000001px;top:198.65px;">70</span>
<span id="t57" style="font-size:5.5px;color:#8c8c8c;left:756.1500000000001px;top:198.65px;">80</span>
<span id="t58" style="font-size:5.5px;color:#8c8c8c;left:6.6px;top:568.0px;transform-origin:0 0;transform:rotate(-90deg) translate(0,-50%);">-10</span>
<span id="t59" style="font-size:5.5px;color:#8c8c8c;left:6.6px;top:492.4px;transform-origin:0 0;transform:rotate(-90deg) translate(0,-50%);">0</span>
<span id="t60" style="font-size:5.5px;color:#8c8c8c;left:6.6px;top:416.79999999999995px;transform-origin:0 0;transform:rotate(-90deg) translate(0,-50%);">10</span>
<span id="t61" style="font-size:5.5px;color:#8c8c8c;left:6.6px;top:341.2px;transform-origin:0 0;transform:rotate(-90deg) translate(0,-50%);">20</span>
<span id="t62" style="font-size:5.5px;color:#8c8c8c;left:6.6px;top:265.6px;transform-origin:0 0;transform:rotate(-90deg) translate(0,-50%);">30</span>
<span id="t63" style="font-size:6.4px;color:#e8eef9;letter-spacing:-0.033px;left:18.4px;top:215.40px;">Puoi nascondere questo messaggio dal m...</span>
<span id="t64" style="font-size:5.6px;color:#444;font-weight:bold;letter-spacing:-0.360px;left:801.2px;top:229.4px;transform-origin:0 0;transform:rotate(-90deg) translate(0,-50%);">PROPRIETÀ</span>
<span id="t65" style="font-size:5.6px;color:#444;font-weight:bold;letter-spacing:-0.279px;left:801.2px;top:270.8px;transform-origin:0 0;transform:rotate(-90deg) translate(0,-50%);">COORDINATE</span>
<span id="t66" style="font-size:5.6px;color:#444;font-weight:bold;letter-spacing:-0.156px;left:801.2px;top:319.2px;transform-origin:0 0;transform:rotate(-90deg) translate(0,-50%);">MAGLIA CENTRI</span>
<span id="t67" style="font-size:5.6px;color:#444;font-weight:bold;letter-spacing:-0.239px;left:801.2px;top:385.6px;transform-origin:0 0;transform:rotate(-90deg) translate(0,-50%);">OPERE DI INTERVENTO</span>
<span id="t68" style="font-size:5.6px;color:#444;font-weight:bold;letter-spacing:-0.502px;left:801.2px;top:413.4px;transform-origin:0 0;transform:rotate(-90deg) translate(0,-50%);">CARICHI</span>
<span id="t69" style="font-size:5.6px;color:#444;font-weight:bold;letter-spacing:0.130px;left:801.2px;top:442.6px;transform-origin:0 0;transform:rotate(-90deg) translate(0,-50%);">VINCOLI</span>
<span id="t70" style="font-size:5.6px;color:#444;font-weight:bold;letter-spacing:-0.171px;left:801.2px;top:498.2px;transform-origin:0 0;transform:rotate(-90deg) translate(0,-50%);">OPZIONI DI ANALISI</span>
<span id="t71" style="font-size:5.6px;color:#444;font-weight:bold;letter-spacing:-0.318px;left:801.2px;top:551.2px;transform-origin:0 0;transform:rotate(-90deg) translate(0,-50%);">SINTESI CALCOLO</span>
<span id="t72" style="font-size:6.3px;color:#222;letter-spacing:-0.159px;left:814.4px;top:250.05px;">Gestione legende...</span>
<span id="t73" style="font-size:6.3px;color:#222;letter-spacing:-0.273px;left:822px;top:217.05px;">Bedrock</span>
<span id="t74" style="font-size:6.3px;color:#222;letter-spacing:-0.393px;left:822px;top:231.45px;">Scala</span>
<span id="t75" style="font-size:6.3px;color:#222;left:888.2px;top:217.05px;">4</span>
<span id="t76" style="font-size:6.3px;color:#222;letter-spacing:-0.040px;left:822px;top:262.65px;">Quota stratigrafia</span>
<span id="t77" style="font-size:6.3px;color:#222;letter-spacing:-0.133px;left:822px;top:274.65px;">Peso unità di volume</span>
<span id="t78" style="font-size:6.3px;color:#222;letter-spacing:-0.108px;left:822px;top:286.65px;">Peso unità di volume saturo</span>
<span id="t79" style="font-size:6.3px;color:#222;letter-spacing:0.061px;left:822px;top:298.65px;">Angolo di attrito</span>
<span id="t80" style="font-size:6.3px;color:#222;letter-spacing:-0.176px;left:822px;top:310.65px;">Coesione</span>
<span id="t81" style="font-size:6.3px;color:#222;letter-spacing:-0.088px;left:822px;top:322.65px;">Coesione non drenata</span>
<span id="t82" style="font-size:6.3px;color:#222;letter-spacing:-0.191px;left:822px;top:334.65px;">Descrizione</span>
<span id="t83" style="font-size:6.3px;color:#222;letter-spacing:-0.278px;left:815px;top:348.35px;">Dimensione box legenda</span>
<span id="t84" style="font-size:6.3px;color:#222;letter-spacing:-0.372px;left:907.4px;top:347.85px;">100</span>
<span id="t85" style="font-size:6.3px;color:#222;left:930px;top:348.45px;">%</span>
<span id="t86" style="font-size:6.3px;color:#222;letter-spacing:-0.050px;left:822px;top:362.05px;">Retinatura strati</span>
<span id="t87" style="font-size:6.3px;color:#111;letter-spacing:-0.073px;left:816px;top:374.85px;">Riposiziona legenda strati</span>
<span id="t88" style="font-size:6.3px;color:#111;letter-spacing:-0.179px;left:965px;top:395.45px;transform:translateX(-50%);">Applica</span>
<span id="t89" style="font-size:6px;color:#444;letter-spacing:-0.148px;left:5.6px;top:631.30px;">21.39  30.59</span>
<span id="t90" style="font-size:6px;color:#444;letter-spacing:-0.129px;left:61.6px;top:631.30px;">xc = 13.00 yc = 13.32 Rc = 12.01 Fs=3.04</span>
<span id="t91" style="font-size:6.2px;color:#fff;letter-spacing:-0.313px;left:336px;top:631.20px;">Snap</span>
<span id="t92" style="font-size:6.2px;color:#fff;letter-spacing:0.073px;left:363px;top:631.20px;">Griglia</span>
<span id="t93" style="font-size:6.2px;color:#3b5f9e;letter-spacing:-0.076px;left:384px;top:631.20px;">Visual conci</span>
<span id="t94" style="font-size:6.2px;color:#3b5f9e;letter-spacing:-0.085px;left:419px;top:631.20px;">Visual raggi</span>
<span id="t95" style="font-size:6.2px;color:#fff;letter-spacing:-0.120px;left:454px;top:631.20px;">Nr. conci</span>
<span id="t96" style="font-size:6.2px;color:#fff;letter-spacing:-0.073px;left:480px;top:631.20px;">Linee guida</span>
<span id="t97" style="font-size:6.2px;color:#fff;letter-spacing:-0.201px;left:525px;top:631.20px;">Lingua:IT</span>
<span id="t98" style="font-size:6px;color:#fff;letter-spacing:-0.401px;left:686px;top:631.30px;">GEOSTRU  SLOPE 2025.32.8.1680 F_PAGLIUCA@LIBERO.IT</span>
<span id="t99" style="font-size:6px;color:#fff;letter-spacing:-0.312px;left:849.6px;top:631.30px;">UPDATE AVAILABLE 2025.32.8.1714</span>
<span id="t100" style="font-size:6.2px;color:#fff;letter-spacing:-0.084px;left:953px;top:631.20px;">Unità di misura</span>
<span id="t101" style="font-size:10.6px;color:#111;letter-spacing:0.767px;left:333px;top:359.30px;">P. 2  kg m</span>
<span id="t102" style="font-size:10.6px;color:#111;letter-spacing:0.926px;left:272.8px;top:399.6px;transform-origin:0 0;transform:rotate(-90deg) translate(0,-50%);">P. 150  kg</span>
<span id="t103" style="font-size:3px;color:#8a8a8a;letter-spacing:-0.314px;left:135.6px;top:350.60px;">17.50/30.00</span>
<span id="t104" style="font-size:3px;color:#aaa;letter-spacing:-0.478px;left:135.6px;top:487.10px;">17.50/20.00</span>
<span id="t105" style="font-size:3px;color:#8a8a8a;letter-spacing:-0.314px;left:509.2px;top:350.30px;transform:translateX(-100%);">67.50/30.00</span>
<span id="t106" style="font-size:3px;color:#aaa;letter-spacing:-0.502px;left:510.6px;top:487.10px;transform:translateX(-100%);">67.5/20.0</span>
<span id="t107" style="font-size:11.4px;color:#fa2a2a;letter-spacing:-0.151px;left:525px;top:340.80px;">xc=13.00 yc=13.32 Rc=12.01 Fs=3.04</span>
<span id="t108" style="font-size:7.0px;color:#3a3a3a;letter-spacing:-0.101px;left:558.8px;top:363.50px;">Strato...1</span>
<span id="t109" style="font-size:7.0px;color:#3a3a3a;letter-spacing:0.168px;left:558.8px;top:374.60px;">Peso unità di volume 1370.48 kg/m³</span>
<span id="t110" style="font-size:7.0px;color:#3a3a3a;letter-spacing:0.144px;left:558.8px;top:385.50px;">Angolo di resistenza a taglio 20.45°</span>
<span id="t111" style="font-size:7.0px;color:#3a3a3a;letter-spacing:0.121px;left:558.8px;top:396.60px;">Coesione  kg/cm²</span>
<span id="t112" style="font-size:7.0px;color:#3a3a3a;letter-spacing:0.125px;left:558.8px;top:407.50px;">Coesione non drenata 0.1 kg/cm²</span>
<span id="t113" style="font-size:7.0px;color:#3a3a3a;letter-spacing:-0.101px;left:558.8px;top:429.50px;">Strato...2</span>
<span id="t114" style="font-size:7.0px;color:#3a3a3a;letter-spacing:0.168px;left:558.8px;top:440.60px;">Peso unità di volume 1429.62 kg/m³</span>
<span id="t115" style="font-size:7.0px;color:#3a3a3a;letter-spacing:0.144px;left:558.8px;top:451.50px;">Angolo di resistenza a taglio 21.75°</span>
<span id="t116" style="font-size:7.0px;color:#3a3a3a;letter-spacing:0.121px;left:558.8px;top:462.60px;">Coesione  kg/cm²</span>
<span id="t117" style="font-size:7.0px;color:#3a3a3a;letter-spacing:0.130px;left:558.8px;top:473.50px;">Coesione non drenata 0.387 kg/cm²</span>
<span id="t118" style="font-size:7.0px;color:#3a3a3a;letter-spacing:-0.101px;left:558.8px;top:495.50px;">Strato...3</span>
<span id="t119" style="font-size:7.0px;color:#3a3a3a;letter-spacing:0.168px;left:558.8px;top:506.60px;">Peso unità di volume 1649.87 kg/m³</span>
<span id="t120" style="font-size:7.0px;color:#3a3a3a;letter-spacing:0.100px;left:558.8px;top:517.50px;">Angolo di resistenza a taglio 27°</span>
<span id="t121" style="font-size:7.0px;color:#3a3a3a;letter-spacing:0.121px;left:558.8px;top:528.60px;">Coesione  kg/cm²</span>
<span id="t122" style="font-size:7.0px;color:#3a3a3a;letter-spacing:0.130px;left:558.8px;top:539.50px;">Coesione non drenata 0.571 kg/cm²</span>
<span id="t123" style="font-size:7.0px;color:#3a3a3a;letter-spacing:-0.101px;left:558.8px;top:561.70px;">Strato...4</span>
<span id="t124" style="font-size:7.0px;color:#3a3a3a;letter-spacing:0.168px;left:558.8px;top:572.80px;">Peso unità di volume 2299.42 kg/m³</span>
<span id="t125" style="font-size:7.0px;color:#3a3a3a;letter-spacing:0.100px;left:558.8px;top:583.70px;">Angolo di resistenza a taglio 38°</span>
<span id="t126" style="font-size:7.0px;color:#3a3a3a;letter-spacing:0.121px;left:558.8px;top:594.80px;">Coesione  kg/cm²</span>
<span id="t127" style="font-size:7.0px;color:#3a3a3a;letter-spacing:0.130px;left:558.8px;top:605.70px;">Coesione non drenata 0.489 kg/cm²</span>
<span id="t128" style="font-size:13.6px;color:#222;font-weight:bold;font-family:'Liberation Serif', serif;left:11.2px;top:147.80px;transform:translateX(-50%);">A</span>
</body></html>
